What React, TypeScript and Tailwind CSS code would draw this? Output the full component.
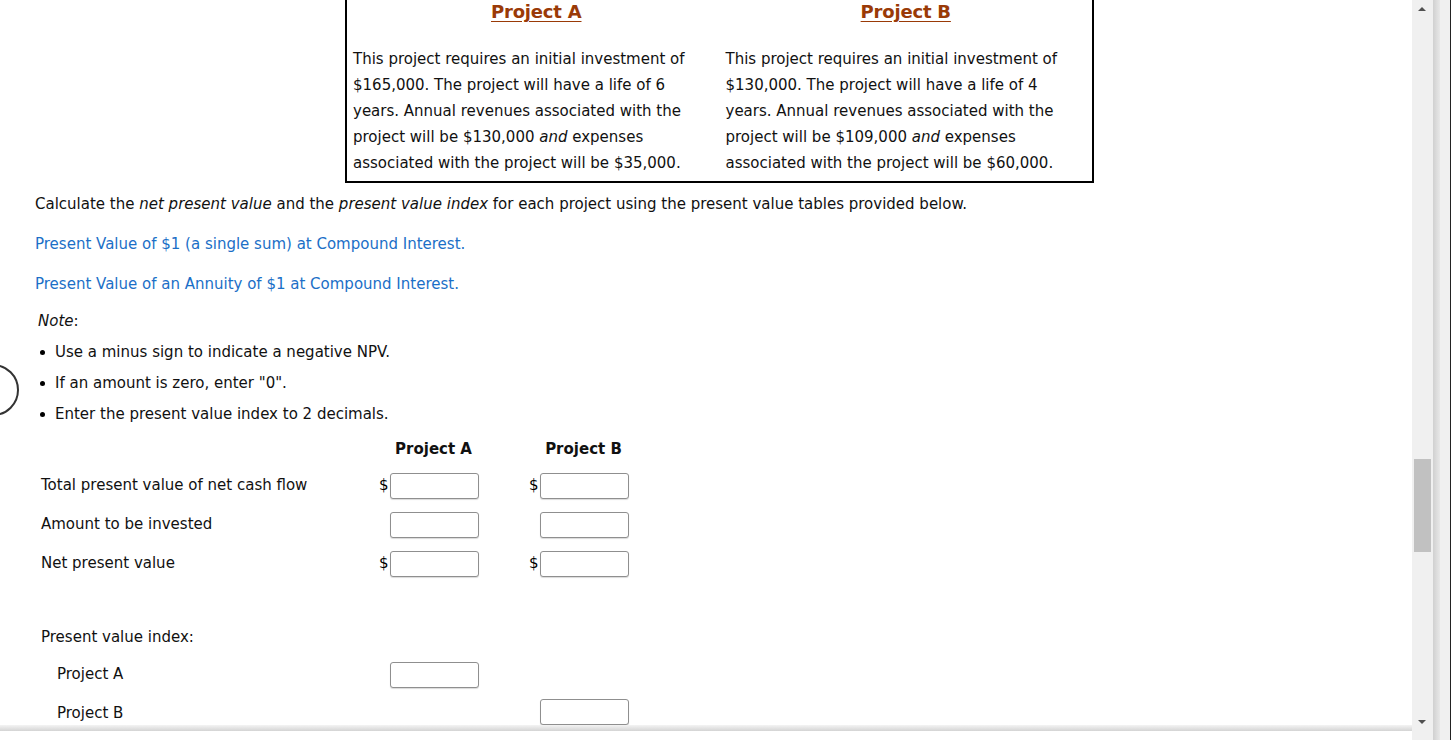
const font = { fontFamily: '"DejaVu Sans", Verdana, sans-serif' };

function Money({ show = true }: { show?: boolean }) {
  return (
    <div className="flex w-[150px] items-center">
      <span className="w-[11px] text-[15px] text-black">{show ? '$' : ''}</span>
      <input
        type="text"
        className="h-[26px] w-[89px] rounded-[3px] border border-[#8f8f8f] bg-white shadow-[0_1px_1px_rgba(0,0,0,0.15)]"
      />
    </div>
  );
}

function Row({ label, dollar }: { label: string; dollar: boolean }) {
  return (
    <div className="flex h-[39px] items-center">
      <div className="w-[344px] pl-[6px]">{label}</div>
      <Money show={dollar} />
      <Money show={dollar} />
    </div>
  );
}

const projects = [
  { t: 'Project A', a: '$165,000', y: '6', r: '$130,000', e: '$35,000' },
  { t: 'Project B', a: '$130,000', y: '4', r: '$109,000', e: '$60,000' },
];

export default function App() {
  return (
    <div className="relative h-[740px] w-[1452px] overflow-hidden bg-white text-[15px] text-[#111]" style={font}>
      {/* scrolled page */}
      <div className="flex h-full">
        <div className="relative w-[1412px] overflow-hidden">
          <div className="pl-[35px] pr-[8px]">
            {/* project box */}
            <div className="mx-auto flex w-[749px] border-x-2 border-b-2 border-black px-[6px] pb-[5px]">
              {projects.map((p, i) => (
                <div key={p.t} className={`w-1/2 ${i === 1 ? 'pl-[6px]' : ''}`}>
                  <div className="h-[46px] text-center">
                    <span className="text-[18px] font-bold leading-[24px] tracking-[-0.2px] text-[#9a3a07] underline underline-offset-[3px]">
                      {p.t}
                    </span>
                  </div>
                  <p className="whitespace-nowrap leading-[26px]">
                    This project requires an initial investment of
                    <br />
                    {p.a}. The project will have a life of {p.y}
                    <br />
                    years. Annual revenues associated with the
                    <br />
                    project will be {p.r} <i>and</i> expenses
                    <br />
                    associated with the project will be {p.e}.
                  </p>
                </div>
              ))}
            </div>

            <p className="mt-[10px] leading-[22px]">
              Calculate the <i>net present value</i> and the <i>present value index</i> for each project using the
              present value tables provided below.
            </p>
            <p className="mt-[18px] leading-[22px] text-[#1b6fc7]">Present Value of $1 (a single sum) at Compound Interest.</p>
            <p className="mt-[18px] leading-[22px] text-[#1b6fc7]">
              Present Value of an Annuity of $1 at Compound Interest.
            </p>
            <p className="mt-[15px] pl-[3px] leading-[22px]">
              <i>Note</i>:
            </p>
            <ul className="mt-[5px] pl-[4px]">
              {[
                'Use a minus sign to indicate a negative NPV.',
                'If an amount is zero, enter "0".',
                'Enter the present value index to 2 decimals.',
              ].map((s) => (
                <li key={s} className="flex h-[31px] items-center">
                  <span className="ml-[1px] mr-[10px] h-[5px] w-[5px] rounded-full bg-black" />
                  {s}
                </li>
              ))}
            </ul>

            {/* answer table */}
            <div className="mt-[4px]">
              <div className="flex h-[30px] items-center font-bold">
                <div className="w-[344px]" />
                <div className="w-[150px] pl-[11px]">
                  <div className="w-[87px] text-center">Project A</div>
                </div>
                <div className="w-[150px] pl-[11px]">
                  <div className="w-[87px] text-center">Project B</div>
                </div>
              </div>
              <div className="mt-[2px]">
                <Row label="Total present value of net cash flow" dollar />
                <Row label="Amount to be invested" dollar={false} />
                <Row label="Net present value" dollar />
              </div>
              <div className="mt-[36px] flex h-[36px] items-center pl-[6px]">Present value index:</div>
              <div className="flex h-[39px] items-center">
                <div className="w-[344px] pl-[22px]">Project A</div>
                <Money show={false} />
              </div>
              <div className="flex h-[39px] items-center">
                <div className="w-[344px] pl-[22px]">Project B</div>
                <div className="w-[150px]" />
                <div className="-mt-[3px]">
                  <Money show={false} />
                </div>
              </div>
            </div>
          </div>

          {/* partial circle on left edge */}
          <div className="absolute left-[-33px] top-[364px] h-[52px] w-[52px] rounded-full border-2 border-[#333]" />
          {/* bottom shadow */}
          <div className="absolute bottom-0 left-0 h-[15px] w-full bg-white">
            <div className="h-[6px] bg-gradient-to-b from-[#f4f4f4] to-[#d4d4d4]" />
          </div>
        </div>

        {/* scrollbar */}
        <div className="relative w-[21px] bg-[#f0f0f0]">
          <div className="absolute left-[6px] top-[7px] h-0 w-0 border-x-[4px] border-b-[4px] border-x-transparent border-b-[#505050]" />
          <div className="absolute left-[2px] top-[459px] h-[93px] w-[17px] bg-[#c1c1c1]" />
          <div className="absolute bottom-[16px] left-[6px] h-0 w-0 border-x-[4px] border-t-[4px] border-x-transparent border-t-[#505050]" />
        </div>
        <div className="w-[7px] bg-gradient-to-r from-[#d0d0d0] to-[#e8e8e8]" />
        <div className="w-[11px] border-r border-[#222] bg-[#f0f0f0]" />
      </div>
    </div>
  );
}
